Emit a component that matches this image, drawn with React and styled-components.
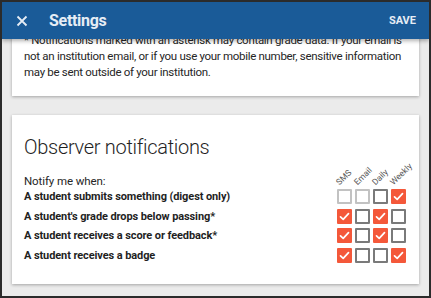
import React from "react";
import styled, { createGlobalStyle } from "styled-components";

const Global = createGlobalStyle`
  html, body { margin: 0; padding: 0; }
  body { font-family: Roboto, "Liberation Sans", sans-serif; }
  * { box-sizing: border-box; }
`;

const Frame = styled.div`
  position: relative;
  width: 431px;
  height: 298px;
  border: 2px solid #2b2b2b;
  background: #ebebeb;
  overflow: hidden;
`;

const AppBar = styled.header`
  position: absolute;
  top: 0;
  left: 0;
  right: 0;
  height: 37px;
  background: #1a5b98;
  display: flex;
  align-items: center;
  padding: 0 13px 0 14px;
  box-shadow: 0 2px 4px rgba(0, 0, 0, 0.3);
  z-index: 2;
`;

const IconButton = styled.button`
  border: 0;
  background: none;
  padding: 0;
  width: 12px;
  height: 12px;
  display: flex;
  color: #e6edf5;
`;

const Title = styled.h1`
  margin: 0 0 0 21px;
  flex: 1;
  font-size: 16px;
  letter-spacing: -0.3px;
  font-weight: 700;
  color: #e6edf5;
`;

const SaveButton = styled.button`
  border: 0;
  background: none;
  padding: 0;
  font-family: inherit;
  font-size: 11px;
  font-weight: 700;
  color: #e6edf5;
`;

const Content = styled.main`
  display: flex;
  flex-direction: column;
  gap: 19px;
  padding: 18px 10px 0 10px;
`;

const Card = styled.section`
  background: #fff;
  box-shadow: 0 1px 3px rgba(0, 0, 0, 0.3);
  padding: ${(p) => p.$pad};
`;

const Notice = styled.p`
  margin: 0;
  font-size: 11.5px;
  letter-spacing: -0.3px;
  line-height: 16px;
  white-space: nowrap;
  color: #262626;
`;

const CardTitle = styled.h2`
  margin: 0 0 12px;
  font-size: 20px;
  letter-spacing: -0.3px;
  line-height: 28px;
  font-weight: 300;
  color: #1f1f1f;
`;

const HeadRow = styled.div`
  display: flex;
  align-items: center;
  justify-content: space-between;
  height: 16px;
`;

const Lead = styled.div`
  font-size: 11.5px;
  letter-spacing: -0.1px;
  line-height: 16px;
  color: #262626;
`;

const HeadGroup = styled.div`
  display: grid;
  grid-template-columns: repeat(4, 15px);
  column-gap: 3px;
  align-self: stretch;
`;

const HeadCell = styled.div`
  display: flex;
  align-items: flex-end;
`;

const HeadLabel = styled.span`
  white-space: nowrap;
  font-size: 8.5px;
  line-height: 9px;
  color: #555;
  transform-origin: 0 100%;
  transform: translate(4px, -2px) rotate(-45deg);
`;

const Grid = styled.div`
  display: grid;
  grid-template-columns: 1fr repeat(4, 15px);
  grid-auto-rows: 15px;
  column-gap: 3px;
  row-gap: 4.6px;
  align-items: center;
`;

const RowLabel = styled.div`
  font-size: 11px;
  letter-spacing: -0.1px;
  line-height: 15px;
  font-weight: 700;
  color: #1f1f1f;
`;

const Box = styled.span`
  width: 15px;
  height: 15px;
  display: flex;
  align-items: center;
  justify-content: center;
  border: ${(p) =>
    p.$state === "on"
      ? "2px solid #f4583a"
      : p.$state === "light"
      ? "2px solid #c2c2c2"
      : "2px solid #7a7a7a"};
  background: ${(p) => (p.$state === "on" ? "#f4583a" : "#fff")};
  border-radius: 1px;
`;

const Check = () => (
  <svg width="11" height="11" viewBox="0 0 11 11">
    <polyline
      points="1.5,5.8 4.2,8.3 9.5,2.6"
      fill="none"
      stroke="#fff"
      strokeWidth="1.7"
      strokeLinecap="round"
      strokeLinejoin="round"
    />
  </svg>
);

const Close = () => (
  <svg width="12" height="12" viewBox="0 0 12 12">
    <path d="M1.5 1.5 L10.5 10.5 M10.5 1.5 L1.5 10.5" stroke="currentColor" strokeWidth="1.8" />
  </svg>
);

const columns = ["SMS", "Email", "Daily", "Weekly"];
const rows = [
  { label: "A student submits something (digest only)", states: ["light", "light", "off", "on"] },
  { label: "A student's grade drops below passing*", states: ["on", "off", "on", "off"] },
  { label: "A student receives a score or feedback*", states: ["on", "off", "on", "off"] },
  { label: "A student receives a badge", states: ["on", "off", "off", "on"] },
];

export default function App() {
  return (
    <>
      <Global />
      <Frame>
        <AppBar>
          <IconButton aria-label="Close">
            <Close />
          </IconButton>
          <Title>Settings</Title>
          <SaveButton>SAVE</SaveButton>
        </AppBar>
        <Content>
          <Card $pad="12px 8px 16px 12px">
            <Notice>
              * Notifications marked with an asterisk may contain grade data. If your email is
              <br />
              not an institution email, or if you use your mobile number, sensitive information
              <br />
              may be sent outside of your institution.
            </Notice>
          </Card>
          <Card $pad="18px 13px 21px 12px">
            <CardTitle>Observer notifications</CardTitle>
            <HeadRow>
              <Lead>Notify me when:</Lead>
              <HeadGroup>
                {columns.map((c) => (
                  <HeadCell key={c}>
                    <HeadLabel>{c}</HeadLabel>
                  </HeadCell>
                ))}
              </HeadGroup>
            </HeadRow>
            <Grid>
              {rows.map((r) => (
                <React.Fragment key={r.label}>
                  <RowLabel>{r.label}</RowLabel>
                  {r.states.map((s, i) => (
                    <Box key={i} $state={s}>
                      {s === "on" && <Check />}
                    </Box>
                  ))}
                </React.Fragment>
              ))}
            </Grid>
          </Card>
        </Content>
      </Frame>
    </>
  );
}
